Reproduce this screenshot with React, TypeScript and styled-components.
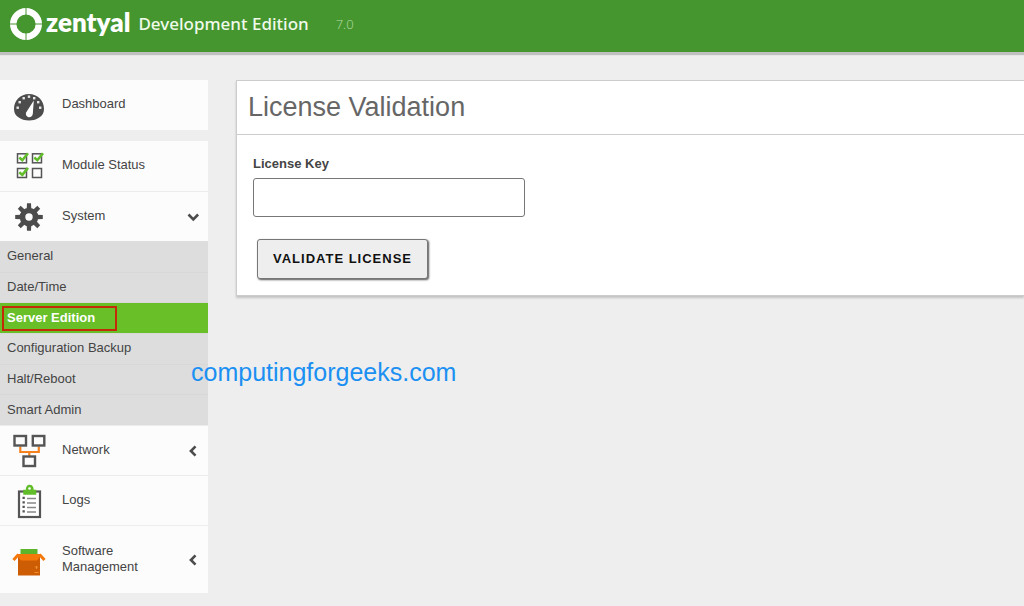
import React from "react";
import styled, { createGlobalStyle, css } from "styled-components";

const GlobalStyle = createGlobalStyle`
  * { box-sizing: border-box; }
  body {
    margin: 0;
    background: #eeeeee;
    color: #444444;
    font: 13px/16px "Liberation Sans", Arial, sans-serif;
  }
`;

const Page = styled.div`
  position: relative;
  min-height: 100vh;
  overflow-x: hidden;
`;

const Header = styled.header`
  display: flex;
  align-items: center;
  height: 52px;
  padding: 0 8px 4px 10px;
  background: #469630;
  box-shadow: 0 3px 1px #c0c0c0;
  color: #ffffff;
`;

const Brand = styled.a`
  display: flex;
  align-items: center;
  gap: 3px;
  color: inherit;
  text-decoration: none;
`;

const BrandName = styled.span`
  font: 800 26px/32px Lato, sans-serif;
  padding-bottom: 4px;
`;

const EditionName = styled.span`
  margin-left: 8px;
  color: #f0faea;
  font: 500 17px/24px "Noto Sans", sans-serif;
`;

const Version = styled.span`
  margin-left: 27px;
  color: #b4dca4;
  font: 300 13px/16px "Open Sans", sans-serif;
`;

const Layout = styled.div`
  display: flex;
  align-items: flex-start;
  gap: 28px;
  padding-top: 28px;
`;

const Sidebar = styled.nav`
  flex: 0 0 208px;
`;

const Menu = styled.ul`
  margin: 0 0 11px;
  padding: 0;
  list-style: none;
  background: #fcfcfc;
`;

const MenuItem = styled.li`
  & + & > a { border-top: 1px solid #ececec; }
`;

const MenuLink = styled.a<{ $tall?: boolean }>`
  display: grid;
  grid-template-columns: 38px 1fr 14px;
  align-items: center;
  column-gap: 14px;
  height: ${(p) => (p.$tall ? 68 : 50)}px;
  padding: 0 8px 0 10px;
  color: inherit;
  text-decoration: none;
`;

const MenuText = styled.span`
  padding-bottom: 2px;
`;

const SubMenu = styled.ul`
  display: grid;
  grid-auto-rows: 1fr;
  height: 184px;
  margin: 0;
  padding: 0;
  list-style: none;
  background: #dddddd;
`;

const SubItem = styled.li`
  display: grid;
  & + & { border-top: 1px solid #d8d8d8; }
`;

const SubLink = styled.a<{ $active?: boolean }>`
  position: relative;
  display: flex;
  align-items: center;
  padding: 0 7px 1px;
  color: inherit;
  text-decoration: none;
  ${(p) =>
    p.$active &&
    css`
      background: #68bf27;
      color: #ffffff;
      font-weight: 700;
    `}
`;

const Highlight = styled.span`
  position: absolute;
  top: 3px;
  left: 2px;
  width: 115px;
  height: 25px;
  border: 2px solid #c52a08;
`;

const Panel = styled.main`
  flex: 1;
  min-width: 0;
  border: 1px solid #cccccc;
  border-right: 0;
  background: #ffffff;
  box-shadow: 0 2px 2px #c4c4c4;
`;

const PanelTitle = styled.h1`
  margin: 0;
  padding: 10px 11px 11px;
  border-bottom: 1px solid #cccccc;
  color: #666666;
  font-size: 27px;
  font-weight: 400;
  line-height: 32px;
`;

const Form = styled.form`
  display: flex;
  flex-direction: column;
  align-items: flex-start;
  padding: 21px 16px 16px;
`;

const Label = styled.label`
  margin-bottom: 6px;
  font-weight: 700;
`;

const TextInput = styled.input`
  width: 272px;
  max-width: 100%;
  height: 39px;
  margin-bottom: 22px;
  padding: 0 8px;
  border: 1px solid #777777;
  border-radius: 3px;
  background: #ffffff;
  font: inherit;
`;

const SubmitButton = styled.button`
  height: 40px;
  margin-left: 4px;
  padding: 0 15px;
  border: 1px solid #777777;
  border-radius: 3px;
  background: #eeeeee;
  box-shadow: 1px 1px 2px #555555;
  color: #111111;
  font: 700 13px/16px "Liberation Sans", Arial, sans-serif;
  letter-spacing: 1px;
  text-transform: uppercase;
`;

const Watermark = styled.div`
  position: absolute;
  top: 356px;
  left: 191px;
  color: #1b90f2;
  font-size: 25px;
  line-height: 32px;
`;

const LogoMark = () => (
  <svg width="33" height="33" viewBox="0 0 33 33" aria-hidden="true">
    <circle cx="16" cy="16" r="12.8" fill="none" stroke="#fff" strokeWidth="6.4" />
    <path d="M16 0v8M16 24v8M0 16h8M24 16h8" stroke="#469630" strokeWidth="1" />
  </svg>
);

const DashboardIcon = () => (
  <svg width="38" height="38" viewBox="0 -3 38 38" aria-hidden="true">
    <path
      d="M19 5C10.500 5 4 11.500 4 19.700c0 4 1.500 6.300 4 8.300 3 2.400 7 3.600 11 3.600s8-1.200 11-3.600c2.500-2 4-4.300 4-8.300C34 11.500 27.500 5 19 5z"
      fill="#4c4c4c"
    />
    <g fill="#e8e8e8">
      <rect x="6.500" y="17.500" width="2.400" height="2.400" />
      <rect x="8.500" y="12" width="2.400" height="2.400" />
      <rect x="12.500" y="8" width="2.400" height="2.400" />
      <rect x="17.800" y="6.500" width="2.400" height="2.400" />
      <rect x="23" y="8" width="2.400" height="2.400" />
      <rect x="27" y="12" width="2.400" height="2.400" />
      <rect x="29" y="17.500" width="2.400" height="2.400" />
    </g>
    <path d="M23.800 11.500l-1 13.200c-.3 2.400-2 3.800-4.200 3.500-2.200-.4-3.200-2.300-2.500-4.600z" fill="#fff" />
  </svg>
);

const ModuleIcon = () => (
  <svg width="38" height="38" viewBox="0 0 38 38" aria-hidden="true">
    <g fill="none" stroke="#555" strokeWidth="1.500">
      <rect x="7.500" y="6.800" width="9" height="9" />
      <rect x="22.500" y="6.800" width="9" height="9" />
      <rect x="7.500" y="21.500" width="9" height="9" />
      <rect x="22.500" y="21.500" width="9" height="9" />
    </g>
    <path
      d="M9.300 10.600l3 2.600 5.700-7M24.300 10.600l3 2.600 5.700-7M9.300 25.300l3 2.600 5.700-7"
      fill="none"
      stroke="#62bd2b"
      strokeWidth="2.600"
    />
  </svg>
);

const GearIcon = () => (
  <svg width="38" height="38" viewBox="0 0 38 38" aria-hidden="true">
    <circle cx="19" cy="19" r="6.500" fill="none" stroke="#4c4c4c" strokeWidth="5.600" />
    <g fill="#4c4c4c">
      {[0, 45, 90, 135, 180, 225, 270, 315].map((a) => (
        <path key={a} d="M16.700 11l.3-5.800h4l.3 5.800z" transform={`rotate(${a} 19 19)`} />
      ))}
    </g>
  </svg>
);

const NetworkIcon = () => (
  <svg width="38" height="38" viewBox="0 0 38 38" aria-hidden="true">
    <path d="M10.300 14.500v5.500h18.500v-5.500M19.300 20v5" fill="none" stroke="#f5821f" strokeWidth="2.200" />
    <g fill="#fcfcfc" stroke="#555" strokeWidth="2.400">
      <rect x="4.500" y="4" width="11.500" height="9.500" />
      <rect x="22.800" y="4" width="11.500" height="9.500" />
      <rect x="13.500" y="24.500" width="11.500" height="9.500" />
    </g>
  </svg>
);

const LogsIcon = () => (
  <svg width="38" height="38" viewBox="0 -1 38 38" aria-hidden="true">
    <rect x="9" y="8.500" width="21" height="25.500" fill="#fff" stroke="#555" strokeWidth="2.200" />
    <path
      d="M14 11V7.500h2.500C16.500 4 17.500 2.500 19.500 2.500s3.500 1.500 3.500 5h2.500V11z"
      fill="#62bd2b"
      stroke="#62bd2b"
      strokeWidth="1.500"
    />
    <circle cx="19.500" cy="5.500" r="1.300" fill="#fff" />
    <path d="M17 15.500h9M17 20h9M17 24.500h9M17 29h9" stroke="#888" strokeWidth="1.300" />
    <path d="M12.500 14.800h2.300M12.500 19.300h2.300M12.500 23.800h2.300M12.500 28.300h2.300" stroke="#555" strokeWidth="2.300" />
  </svg>
);

const PackageIcon = () => (
  <svg width="38" height="38" viewBox="0 -3 38 38" aria-hidden="true">
    <rect x="10.500" y="5" width="17" height="6" fill="#5cb52a" />
    <path d="M8 10h22v21.500H8z" fill="#cc5d04" />
    <path d="M8 10h22v3l-3 3.500H11l-3-3.500z" fill="#f5780a" />
    <path d="M8.500 10.500l-5 5.500M29.500 10.500l5 5.500" stroke="#f5780a" strokeWidth="3" />
    <path d="M26.500 22v3M24.500 28.500h4M26.500 22l-1.200 1.500M26.500 22l1.200 1.500" stroke="#f28d2e" strokeWidth="1" />
  </svg>
);

const Chevron = ({ open }: { open?: boolean }) => (
  <svg width="14" height="14" viewBox="0 0 14 14" aria-hidden="true">
    <path
      d={open ? "M2.500 4.500L7.300 9.300l4.800-4.800" : "M9.500 2.300L4.900 7l4.600 4.700"}
      fill="none"
      stroke="#4c4c4c"
      strokeWidth="2.600"
    />
  </svg>
);

const systemPages = [
  "General",
  "Date/Time",
  "Server Edition",
  "Configuration Backup",
  "Halt/Reboot",
  "Smart Admin",
];

export default function App() {
  return (
    <Page>
      <GlobalStyle />
      <Header>
        <Brand href="#">
          <LogoMark />
          <BrandName>zentyal</BrandName>
        </Brand>
        <EditionName>Development Edition</EditionName>
        <Version>7.0</Version>
      </Header>
      <Layout>
        <Sidebar aria-label="Main menu">
          <Menu>
            <MenuItem>
              <MenuLink href="#"><DashboardIcon /><MenuText>Dashboard</MenuText></MenuLink>
            </MenuItem>
          </Menu>
          <Menu>
            <MenuItem>
              <MenuLink href="#"><ModuleIcon /><MenuText>Module Status</MenuText></MenuLink>
            </MenuItem>
            <MenuItem>
              <MenuLink href="#"><GearIcon /><MenuText>System</MenuText><Chevron open /></MenuLink>
              <SubMenu>
                {systemPages.map((name) => {
                  const active = name === "Server Edition";
                  return (
                    <SubItem key={name}>
                      <SubLink href="#" $active={active}>
                        {name}
                        {active && <Highlight />}
                      </SubLink>
                    </SubItem>
                  );
                })}
              </SubMenu>
            </MenuItem>
            <MenuItem>
              <MenuLink href="#"><NetworkIcon /><MenuText>Network</MenuText><Chevron /></MenuLink>
            </MenuItem>
            <MenuItem>
              <MenuLink href="#"><LogsIcon /><MenuText>Logs</MenuText></MenuLink>
            </MenuItem>
            <MenuItem>
              <MenuLink href="#" $tall><PackageIcon /><MenuText>Software Management</MenuText><Chevron /></MenuLink>
            </MenuItem>
          </Menu>
        </Sidebar>
        <Panel>
          <PanelTitle>License Validation</PanelTitle>
          <Form onSubmit={(e) => e.preventDefault()}>
            <Label htmlFor="license-key">License Key</Label>
            <TextInput id="license-key" type="text" />
            <SubmitButton type="submit">Validate License</SubmitButton>
          </Form>
        </Panel>
      </Layout>
      <Watermark>computingforgeeks.com</Watermark>
    </Page>
  );
}
